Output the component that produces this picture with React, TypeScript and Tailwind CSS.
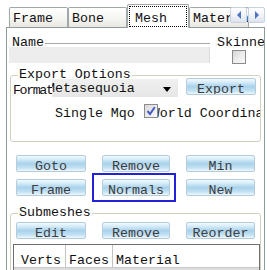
import React from "react";

const btnBg =
  "bg-[linear-gradient(180deg,#f2f9fe_0%,#d6ecf9_22%,#a9d2eb_50%,#c2e1f3_78%,#eef7fd_100%)]";

function Btn({ label, className = "" }: { label: string; className?: string }) {
  return (
    <div
      className={`h-[17px] rounded-[2px] border border-[#b4cddd] ${btnBg} flex justify-center overflow-hidden text-[#3c3c3c] leading-[13px] pt-[4px] ${className}`}
    >
      <span className="whitespace-nowrap">{label}</span>
    </div>
  );
}

function Check({ checked = false, className = "" }: { checked?: boolean; className?: string }) {
  return (
    <div
      className={`w-[14px] h-[14px] border border-[#8c8c8c] bg-[linear-gradient(135deg,#d6d6d6_0%,#ececec_50%,#fafafa_100%)] flex items-center justify-center ${className}`}
    >
      {checked && (
        <svg width="10" height="10" viewBox="0 0 10 10">
          <path d="M1.5 5 L4 8 L8.8 1.2" stroke="#4a5fc4" strokeWidth="2" fill="none" />
        </svg>
      )}
    </div>
  );
}

function Tab({ label, w }: { label: string; w: string }) {
  return (
    <div
      className={`${w} h-[20px] border border-b-0 border-[#a0a8aa] rounded-t-[2px] bg-[linear-gradient(180deg,#ffffff_0%,#f4f4f0_60%,#e8e7e2_100%)] pl-[3px] pt-[4px] leading-[13px] overflow-hidden whitespace-nowrap shrink-0`}
    >
      {label}
    </div>
  );
}

function Arrow({ dir }: { dir: "l" | "r" }) {
  return (
    <div className="w-[17px] h-[16px] border border-[#c9d3df] rounded-[2px] bg-[linear-gradient(180deg,#ffffff_0%,#eef1f7_60%,#dde3ee_100%)] flex items-center justify-center">
      <svg width="6" height="8" viewBox="0 0 6 8">
        {dir === "l" ? (
          <path d="M5 0 L5 8 L1 4 Z" fill="#4f72c2" />
        ) : (
          <path d="M1 0 L1 8 L5 4 Z" fill="#4f72c2" />
        )}
      </svg>
    </div>
  );
}

export default function App() {
  return (
    <div className="w-[267px] h-[270px] bg-white overflow-hidden font-['Liberation_Mono',monospace] text-[13.3px] text-[#111]">
      {/* tab strip */}
      <div className="relative h-[27px] flex items-end pl-[9px]">
        <Tab label="Frame" w="w-[59px]" />
        <Tab label="Bone" w="w-[59px]" />
        <div className="relative z-10 w-[62px] h-[24px] -mb-[1px] border border-b-0 border-[#a0a8aa] rounded-t-[2px] bg-white p-[1px] shrink-0">
          <div className="h-full border border-dotted border-black pl-[5px] pt-[5px] leading-[13px]">
            Mesh
          </div>
        </div>
        <Tab label="Materials" w="w-[60px]" />
        <div className="absolute right-[2px] top-[7px] flex gap-[1px]">
          <Arrow dir="l" />
          <Arrow dir="r" />
        </div>
      </div>

      {/* panel */}
      <div className="ml-[6px] w-[259px] h-[260px] border border-[#919b9c] bg-white pt-[8px]">
        {/* name row */}
        <div className="flex">
          <div className="ml-[2px] w-[201px]">
            <div className="flex h-[11px] leading-[13px] pl-[3px]">
              <span className="bg-white pr-[1px]">Name</span>
              <div className="flex-1 h-[8px] border-b border-[#a8a8a8]" />
            </div>
            <div className="h-[16px] bg-[#ededed] border-r border-[#dcdcdc]" />
          </div>
          <div className="flex-1 flex flex-col items-start pl-[7px] overflow-hidden">
            <span className="leading-[13px] whitespace-nowrap">Skinned</span>
            <Check className="ml-[15px] mt-[1px]" />
          </div>
        </div>

        {/* export options */}
        <div className="relative mt-[11px] mx-[3px] h-[67px] border border-[#d0d0bf] rounded-[3px] pl-[2px] pt-[2px]">
          <span className="absolute left-[7px] -top-[8px] bg-white px-[1px] leading-[13px] whitespace-nowrap">
            Export Options
          </span>
          <div className="flex items-start">
            <div className="w-[39px] overflow-hidden leading-[13px] mt-[6px] whitespace-nowrap tracking-[-1.4px]">
              Format
            </div>
            <div className="w-[126px] h-[18px] mt-[1px] bg-[linear-gradient(180deg,#f0f0f0_0%,#e6e6e6_100%)] flex items-center overflow-hidden relative">
              <span className="-ml-[5px] leading-[13px] whitespace-nowrap pt-[1px]">Metasequoia</span>
              <svg className="absolute left-[111px] top-[8px]" width="8" height="5" viewBox="0 0 8 5">
                <path d="M0 0 L8 0 L4 5 Z" fill="#000" />
              </svg>
            </div>
            <Btn label="Export" className="ml-[8px] w-[70px]" />
          </div>
          <div className="flex items-start mt-[7px] pl-[42px]">
            <span className="leading-[13px] mt-[3px] whitespace-nowrap">Single Mqo</span>
            <div className="relative ml-[9px] w-[116px] overflow-hidden">
              <span className="block pl-[8px] leading-[13px] mt-[3px] whitespace-nowrap">
                World Coordinates
              </span>
              <Check checked className="absolute left-0 top-0 bg-white" />
            </div>
          </div>
        </div>

        {/* button grid */}
        <div className="mt-[13px] pl-[9px] grid grid-cols-[70px_68px_69px] gap-x-[16px] gap-y-[7px]">
          <Btn label="Goto" />
          <Btn label="Remove" />
          <Btn label="Min" />
          <Btn label="Frame" />
          <div className="relative">
            <div className="absolute -left-[10px] -right-[6px] -top-[6px] -bottom-[6px] border-2 border-[#2222d8]" />
            <Btn label="Normals" />
          </div>
          <Btn label="New" />
        </div>

        {/* submeshes */}
        <div className="relative mt-[17px] mx-[3px] h-[80px] border border-[#d0d0bf] rounded-[3px] pl-[5px] pt-[8px]">
          <span className="absolute left-[7px] -top-[8px] bg-white px-[1px] leading-[13px] whitespace-nowrap">
            Submeshes
          </span>
          <div className="grid grid-cols-[70px_68px_69px] gap-x-[16px]">
            <Btn label="Edit" />
            <Btn label="Remove" />
            <Btn label="Reorder" />
          </div>
          <div className="mt-[5px] -ml-[3px] mr-[0px] border border-[#6f6f6f] bg-[#dcdcdc] h-[40px]">
            <div className="flex h-[23px] bg-white border-b border-[#c8c8c8]">
              <div className="w-[52px] border-r border-[#c4c4c4] pl-[7px] pt-[9px] leading-[13px]">Verts</div>
              <div className="w-[47px] border-r border-[#c4c4c4] pl-[3px] pt-[9px] leading-[13px]">Faces</div>
              <div className="flex-1 pl-[3px] pt-[9px] leading-[13px]">Material</div>
            </div>
          </div>
        </div>
      </div>
    </div>
  );
}
